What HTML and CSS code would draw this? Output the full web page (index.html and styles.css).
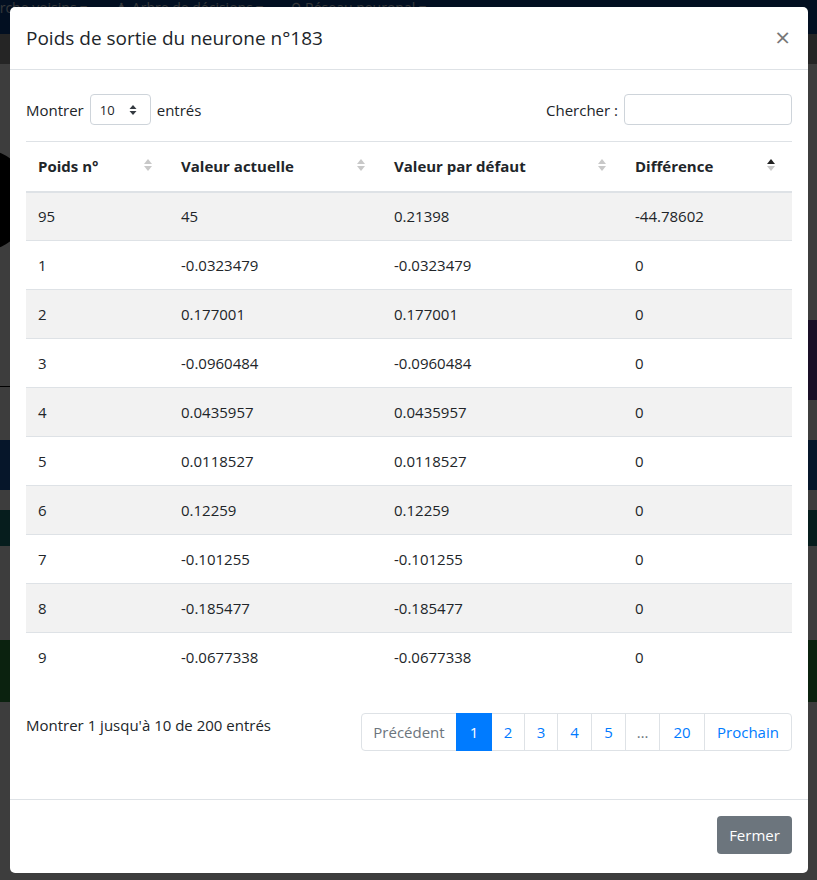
FILE: index.html
```html
<!DOCTYPE html>
<html lang="fr">
<head>
<meta charset="utf-8">
<title>Poids de sortie</title>
<link rel="stylesheet" href="styles.css">
</head>
<body>
<div class="page">
  <div class="nav">
    <span class="nav-item">Recherche voisins ▾</span>
    <span class="nav-item">♟ Arbre de décisions ▾</span>
    <span class="nav-item">⚲ Réseau neuronal ▾</span>
  </div>
  <div class="subbar"></div>
  <div class="blob"></div>
  <div class="strip s-line"></div>
  <div class="strip s-blue"></div>
  <div class="strip s-teal"></div>
  <div class="strip s-green"></div>
  <div class="strip s-purple"></div>
</div>
<div class="backdrop"></div>

<div class="modal">
  <div class="modal-header">
    <h5 class="modal-title">Poids de sortie du neurone n°183</h5>
    <span class="close">&times;</span>
  </div>
  <div class="modal-body">
    <div class="controls">
      <label class="length">Montrer
        <span class="select">10
          <svg width="8" height="12" viewBox="0 0 8 12"><path d="M4 1 L7.5 5 H0.5 Z M4 11 L7.5 7 H0.5 Z" fill="#343a40"/></svg>
        </span>
        entrés</label>
      <label class="search">Chercher : <span class="input"></span></label>
    </div>
    <table class="table">
      <thead>
        <tr>
          <th class="c1">Poids n°<i class="sort"></i></th>
          <th class="c2">Valeur actuelle<i class="sort"></i></th>
          <th class="c3">Valeur par défaut<i class="sort"></i></th>
          <th class="c4">Différence<i class="sort asc"></i></th>
        </tr>
      </thead>
      <tbody>
        <tr><td>95</td><td>45</td><td>0.21398</td><td>-44.78602</td></tr>
        <tr><td>1</td><td>-0.0323479</td><td>-0.0323479</td><td>0</td></tr>
        <tr><td>2</td><td>0.177001</td><td>0.177001</td><td>0</td></tr>
        <tr><td>3</td><td>-0.0960484</td><td>-0.0960484</td><td>0</td></tr>
        <tr><td>4</td><td>0.0435957</td><td>0.0435957</td><td>0</td></tr>
        <tr><td>5</td><td>0.0118527</td><td>0.0118527</td><td>0</td></tr>
        <tr><td>6</td><td>0.12259</td><td>0.12259</td><td>0</td></tr>
        <tr><td>7</td><td>-0.101255</td><td>-0.101255</td><td>0</td></tr>
        <tr><td>8</td><td>-0.185477</td><td>-0.185477</td><td>0</td></tr>
        <tr><td>9</td><td>-0.0677338</td><td>-0.0677338</td><td>0</td></tr>
      </tbody>
    </table>
    <div class="bottom">
      <div class="info">Montrer 1 jusqu'à 10 de 200 entrés</div>
      <ul class="pagination">
        <li class="pg disabled w-prev">Précédent</li>
        <li class="pg active w-1">1</li>
        <li class="pg w-2">2</li>
        <li class="pg w-3">3</li>
        <li class="pg w-4">4</li>
        <li class="pg w-5">5</li>
        <li class="pg ell w-e">…</li>
        <li class="pg w-20">20</li>
        <li class="pg w-next">Prochain</li>
      </ul>
    </div>
  </div>
  <div class="modal-footer">
    <button class="btn">Fermer</button>
  </div>
</div>
</body>
</html>
```

FILE: styles.css
```css
* { box-sizing: border-box; }
html, body { margin: 0; padding: 0; }
body {
  width: 817px;
  height: 880px;
  overflow: hidden;
  position: relative;
  background: #3b3b3b;
  font-family: "Open Sans", "Noto Sans", sans-serif;
  font-size: 15px;
  color: #212529;
}

/* page behind the modal */
.page { position: absolute; inset: 0; background: #ffffff; }
.nav {
  height: 34px;
  background: #0a3f8a;
  display: flex;
  gap: 28px;
  margin-left: -40px;
  align-items: flex-start;
  color: #dfe6f0;
  font-size: 14px;
  line-height: 16px;
  white-space: nowrap;
}
.subbar { height: 30px; background: #9a9a9a; }
.blob { position: absolute; left: -60px; top: 150px; width: 90px; height: 100px; border-radius: 50%; background: #000; }
.strip { position: absolute; left: 0; right: 0; }
.s-line { top: 386px; height: 1px; background: #000; }
.s-blue { top: 440px; height: 50px; background: #1b5bb0; }
.s-teal { top: 510px; height: 36px; background: #1a7a78; }
.s-green { top: 640px; height: 62px; background: #2f8d3e; }
.s-purple { top: 320px; height: 80px; background: #6b3fa0; left: 700px; }
.backdrop { position: absolute; inset: 0; background: rgba(0,0,0,0.76); }

/* modal */
.modal {
  position: absolute;
  left: 10px;
  top: 7px;
  width: 798px;
  height: 866px;
  background: #fff;
  border-radius: 5px;
  display: flex;
  flex-direction: column;
}
.modal-header {
  height: 63px;
  border-bottom: 1px solid #dee2e6;
  display: flex;
  align-items: center;
  justify-content: space-between;
  padding: 0 16px;
}
.modal-title { margin: 0; font-size: 19px; font-weight: 500; line-height: 24px; }
.close { font-size: 26px; color: #777; font-weight: 400; line-height: 1; margin-right: 2px; margin-top: -2px; }

.modal-body { padding: 24px 16px 0 16px; flex: 1; }
.controls { display: flex; justify-content: space-between; align-items: center; height: 31px; }
.length, .search { display: flex; align-items: center; gap: 6px; font-size: 15px; }
.select {
  width: 61px; height: 31px;
  border: 1px solid #ced4da; border-radius: 4px;
  display: flex; align-items: center; justify-content: space-between;
  padding: 0 13px 0 9px;
  font-size: 13px;
}
.input { width: 168px; height: 31px; border: 1px solid #ced4da; border-radius: 4px; display: inline-block; }

.table { width: 766px; border-collapse: collapse; margin-top: 16px; table-layout: fixed; }
.table th, .table td { text-align: left; padding: 0 12px; }
.table thead th {
  height: 50px;
  border-top: 1px solid #dee2e6;
  border-bottom: 2px solid #dee2e6;
  font-weight: 700;
  position: relative;
  font-size: 15px;
}
.c1 { width: 143px; }
.c2 { width: 213px; }
.c3 { width: 241px; }
.c4 { width: 169px; }
.table td { height: 49px; border-top: 1px solid #dee2e6; font-size: 15px; }
.table tbody tr:first-child td { border-top: none; }
.table tbody tr:nth-child(odd) { background: #f2f2f2; }

.sort { position: absolute; right: 16px; top: 17px; width: 9px; height: 14px; }
.sort::before, .sort::after {
  content: ""; position: absolute; left: 0;
  border-left: 4.5px solid transparent; border-right: 4.5px solid transparent;
}
.sort::before { top: 0; border-bottom: 5px solid #c8c8c8; }
.sort::after { top: 7px; border-top: 5px solid #c8c8c8; }
.sort.asc::before { border-bottom-color: #222; }

.bottom { display: flex; justify-content: space-between; align-items: flex-start; margin-top: 31px; }
.info { font-size: 15px; padding-top: 2px; }
.pagination { list-style: none; margin: 0; padding: 0; display: flex; }
.pg {
  height: 38px;
  border: 1px solid #dee2e6;
  margin-left: -1px;
  display: flex; align-items: center; justify-content: center;
  color: #007bff;
  font-size: 15px;
}
.pg:first-child { border-radius: 4px 0 0 4px; margin-left: 0; }
.pg:last-child { border-radius: 0 4px 4px 0; }
.pg.disabled { color: #6c757d; }
.pg.ell { color: #6c757d; }
.pg.active { background: #007bff; border-color: #007bff; color: #fff; position: relative; }
.w-prev { width: 96px; }
.w-1 { width: 36px; }
.w-2 { width: 34px; }
.w-3 { width: 34px; }
.w-4 { width: 35px; }
.w-5 { width: 35px; }
.w-e { width: 35px; }
.w-20 { width: 46px; }
.w-next { width: 88px; }

.modal-footer {
  height: 74px;
  border-top: 1px solid #dee2e6;
  display: flex; align-items: flex-start; justify-content: flex-end;
  padding: 16px 16px 0 16px;
}
.btn {
  background: #6c757d; color: #fff; border: none; border-radius: 4px;
  width: 75px; height: 38px;
  font-family: inherit; font-size: 15px;
}
```
